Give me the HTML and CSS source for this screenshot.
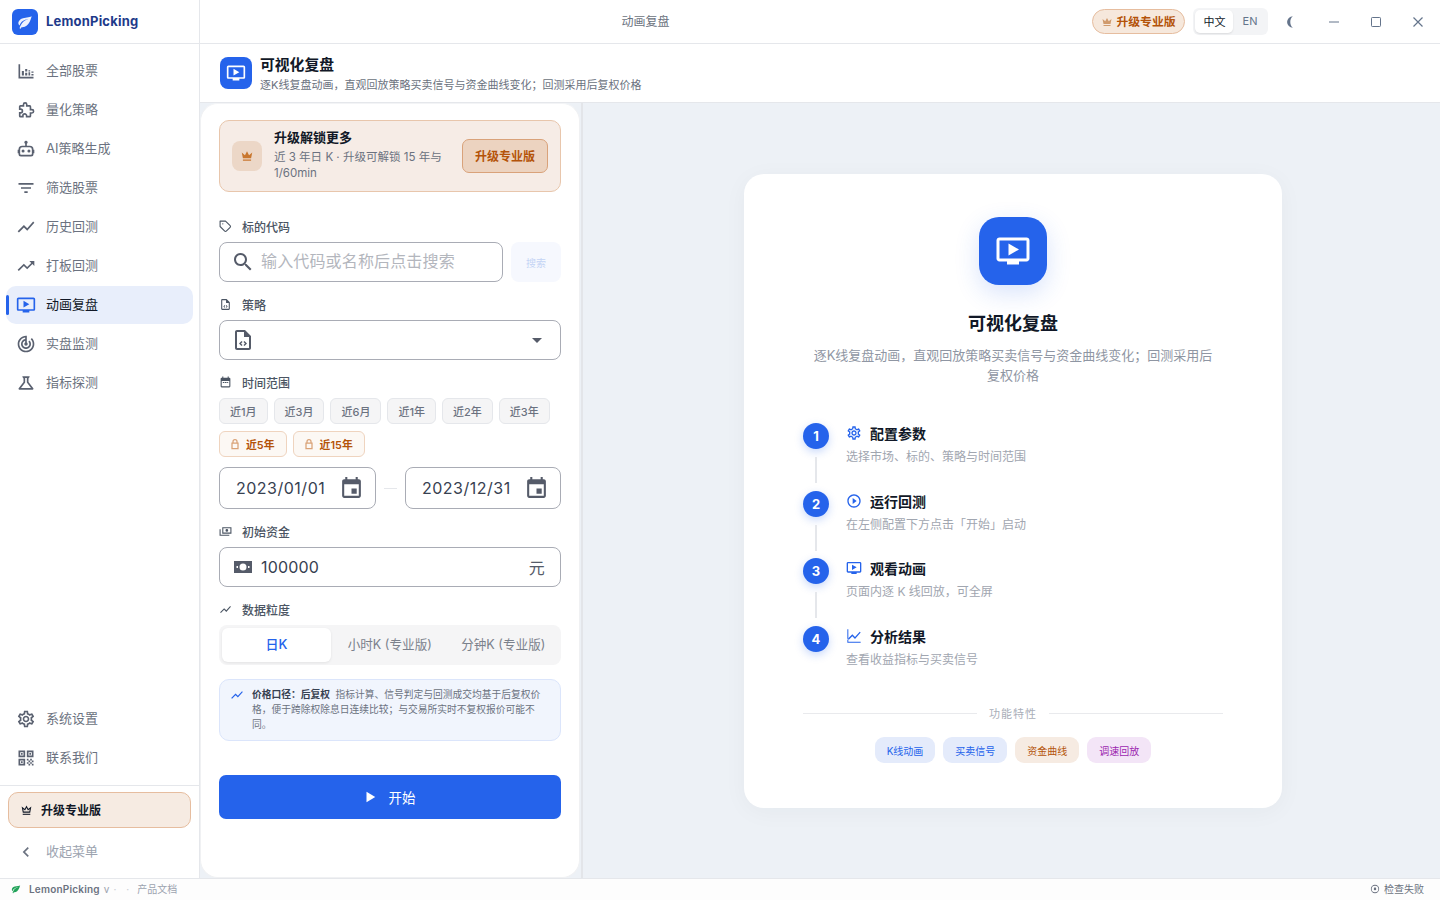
FILE: index.html
```html
<!DOCTYPE html>
<html lang="zh-CN">
<head>
<meta charset="utf-8">
<title>LemonPicking</title>
<link rel="stylesheet" href="styles.css">
</head>
<body>
<div class="app">
  <div class="top">
    <aside class="sidebar">
      <div class="brand">
        <span class="brand-logo"><svg viewBox="0 0 24 24" class="i16"><path fill="#fff" fill-opacity=".92" d="M17 8C8 10 5.900 16.170 3.820 21.340l1.890.66.95-2.300c.48.17.98.3 1.340.3C19 20 22 3 22 3c-1 2-8 2.250-13 3.250S2 11.500 2 13.500s1.750 3.750 1.750 3.750C7 8 17 8 17 8z"/></svg></span>
        <span class="brand-name">LemonPicking</span>
      </div>
      <nav class="nav">
        <a class="nav-item"><svg viewBox="0 0 24 24" class="i20"><path fill="currentColor" d="M3 4h2v15h16v2H3zM7 12h2.500v5.500H7zM11 14h2.500v3.500H11zM11 9.500h2.500V12.500H11zM15 13.500h2v4h-2zM15 11h2v1.500h-2zM18.500 15.500H21v2h-2.500zM18.500 12.500H21v1.500h-2.500z"/></svg><span>全部股票</span></a>
        <a class="nav-item"><svg viewBox="-1.500 -1.500 27 27" class="i20"><path fill="none" stroke="currentColor" stroke-width="2.200" d="M20 11.500h-2V7.500c0-.55-.45-1-1-1h-4V4.500a2.200 2.200 0 0 0-4.400 0v2H4.500c-.55 0-1 .45-1 1v3.300h1.200a2.500 2.500 0 0 1 0 5H3.500V20c0 .55.45 1 1 1h3.300v-1.200a2.500 2.500 0 0 1 5 0V21H17c.55 0 1-.45 1-1v-4h2a2.250 2.250 0 0 0 0-4.500z"/></svg><span>量化策略</span></a>
        <a class="nav-item"><svg viewBox="0 0 24 24" class="i20"><path fill="currentColor" fill-rule="evenodd" d="M12 2a2 2 0 0 1 1 3.730V8h3.500A4.500 4.500 0 0 1 21 12.500V13h1v4h-1v1a3 3 0 0 1-3 3H6a3 3 0 0 1-3-3v-1H2v-4h1v-.5A4.500 4.500 0 0 1 7.500 8H11V5.730A2 2 0 0 1 12 2zM7.500 10A2.500 2.500 0 0 0 5 12.500V18a1 1 0 0 0 1 1h12a1 1 0 0 0 1-1v-5.500a2.500 2.500 0 0 0-2.500-2.500z"/><circle fill="currentColor" cx="8.500" cy="14.500" r="1.800"/><circle fill="currentColor" cx="15.500" cy="14.500" r="1.800"/></svg><span>AI策略生成</span></a>
        <a class="nav-item"><svg viewBox="0 0 24 24" class="i20"><path fill="currentColor" d="M10 18h4v-2h-4v2zM3 6v2h18V6H3zm3 7h12v-2H6v2z"/></svg><span>筛选股票</span></a>
        <a class="nav-item"><svg viewBox="0 0 24 24" class="i20"><path fill="currentColor" d="M3.500 18.490l6-6.010 4 4L22 6.920l-1.410-1.410-7.090 7.970-4-4L2 16.990z"/></svg><span>历史回测</span></a>
        <a class="nav-item"><svg viewBox="0 0 24 24" class="i20"><path fill="currentColor" d="M16 6l2.290 2.290-4.880 4.880-4-4L2 16.590 3.410 18l6-6 4 4 6.300-6.290L22 12V6z"/></svg><span>打板回测</span></a>
        <a class="nav-item active"><svg viewBox="0 0 24 24" class="i20"><path fill="currentColor" d="M21 3H3c-1.110 0-2 .89-2 2v12c0 1.100.89 2 2 2h5v2h8v-2h5c1.100 0 1.990-.9 1.990-2L23 5c0-1.110-.9-2-2-2zm0 14H3V5h18v12zm-5-6l-7 4V7z"/></svg><span>动画复盘</span></a>
        <a class="nav-item"><svg viewBox="0 0 24 24" class="i20"><path fill="currentColor" d="M19.070 4.930l-1.410 1.410C19.100 7.790 20 9.790 20 12c0 4.420-3.580 8-8 8s-8-3.580-8-8c0-4.080 3.050-7.440 7-7.930v2.020C8.160 6.570 6 9.030 6 12c0 3.310 2.690 6 6 6s6-2.690 6-6c0-1.660-.67-3.160-1.760-4.240l-1.410 1.410C15.550 9.900 16 10.900 16 12c0 2.210-1.790 4-4 4s-4-1.790-4-4c0-1.860 1.280-3.410 3-3.860v2.140c-.6.35-1 .98-1 1.720 0 1.100.9 2 2 2s2-.9 2-2c0-.74-.4-1.380-1-1.720V2h-1C6.480 2 2 6.480 2 12s4.480 10 10 10 10-4.480 10-10c0-2.760-1.120-5.260-2.930-7.070z"/></svg><span>实盘监测</span></a>
        <a class="nav-item"><svg viewBox="0 0 24 24" class="i20"><path fill="currentColor" fill-rule="evenodd" d="M15.960 4H8.040c-.42 0-.65.48-.39.81L9 6.500v4.170L3.200 18.400c-.49.66-.02 1.600.8 1.600h16c.82 0 1.290-.94.8-1.600L15 10.670V6.500l1.350-1.690c.26-.33.03-.81-.39-.81zM13 11.330L18 18H6l5-6.670V6h2z"/></svg><span>指标探测</span></a>
      </nav>
      <div class="nav-bottom">
        <a class="nav-item"><svg viewBox="0 0 24 24" class="i20"><path fill="currentColor" d="M19.430 12.980c.04-.32.07-.64.07-.98 0-.34-.03-.66-.07-.98l2.110-1.650c.19-.15.24-.42.12-.64l-2-3.460c-.09-.16-.26-.25-.44-.25-.06 0-.12.01-.17.03l-2.490 1c-.52-.4-1.080-.73-1.690-.98l-.38-2.650C14.460 2.180 14.250 2 14 2h-4c-.25 0-.46.18-.49.42l-.38 2.650c-.61.25-1.170.59-1.690.98l-2.490-1c-.06-.02-.12-.03-.18-.03-.17 0-.34.09-.43.25l-2 3.460c-.13.22-.07.49.12.64l2.110 1.650c-.04.32-.07.65-.07.98 0 .33.03.66.07.98l-2.110 1.650c-.19.15-.24.42-.12.64l2 3.460c.09.16.26.25.44.25.06 0 .12-.01.17-.03l2.490-1c.52.4 1.080.73 1.690.98l.38 2.650c.03.24.24.42.49.42h4c.25 0 .46-.18.49-.42l.38-2.650c.61-.25 1.170-.59 1.690-.98l2.490 1c.06.02.12.03.18.03.17 0 .34-.09.43-.25l2-3.460c.12-.22.07-.49-.12-.64l-2.110-1.650zm-1.980-1.710c.04.31.05.52.05.73 0 .21-.02.43-.05.73l-.14 1.130.89.7 1.080.84-.7 1.210-1.270-.51-1.040-.42-.9.68c-.43.32-.84.56-1.250.73l-1.060.43-.16 1.130-.2 1.350h-1.400l-.19-1.350-.16-1.130-1.060-.43c-.43-.18-.83-.41-1.230-.71l-.91-.7-1.060.43-1.270.51-.7-1.210 1.080-.84.89-.7-.14-1.130c-.03-.31-.05-.54-.05-.74s.02-.43.05-.73l.14-1.130-.89-.7-1.080-.84.7-1.210 1.270.51 1.040.42.9-.68c.43-.32.84-.56 1.250-.73l1.060-.43.16-1.130.2-1.350h1.390l.19 1.350.16 1.130 1.060.43c.43.18.83.41 1.230.71l.91.7 1.060-.43 1.270-.51.7 1.210-1.070.85-.89.7.14 1.130zM12 8c-2.210 0-4 1.790-4 4s1.790 4 4 4 4-1.790 4-4-1.790-4-4-4zm0 6c-1.100 0-2-.9-2-2s.9-2 2-2 2 .9 2 2-.9 2-2 2z"/></svg><span>系统设置</span></a>
        <a class="nav-item"><svg viewBox="0 0 24 24" class="i20"><path fill="currentColor" d="M3 11h8V3H3v8zm2-6h4v4H5V5zM3 21h8v-8H3v8zm2-6h4v4H5v-4zM13 3v8h8V3h-8zm6 6h-4V5h4v4zM19 19h2v2h-2zM13 13h2v2h-2zM15 15h2v2h-2zM13 17h2v2h-2zM15 19h2v2h-2zM17 17h2v2h-2zM17 13h2v2h-2zM19 15h2v2h-2zM6 6h2v2H6zM6 16h2v2H6zM16 6h2v2h-2z"/></svg><span>联系我们</span></a>
      </div>
      <div class="side-foot">
        <button class="side-pro"><svg viewBox="0 0 24 24" class="i14"><path fill="none" stroke="currentColor" stroke-width="2" d="M6 15L4.500 7l4.500 3.500L12 5l3 5.500L19.500 7 18 15z"/><path fill="currentColor" d="M5 18h14v2H5z"/></svg><span>升级专业版</span></button>
        <a class="nav-item collapse"><svg viewBox="0 0 24 24" class="i20"><path fill="currentColor" d="M15.410 7.410L14 6l-6 6 6 6 1.410-1.410L10.830 12z"/></svg><span>收起菜单</span></a>
      </div>
    </aside>

    <div class="main">
      <header class="titlebar">
        <div class="tb-title">动画复盘</div>
        <div class="tb-tools">
          <span class="tb-pro"><svg viewBox="0 0 24 24" class="i12"><path fill="#d09a6c" d="M5 16L3 6l5.500 4.500L12 4l3.500 6.500L21 6l-2 10H5zm0 2h14v2H5z"/></svg>升级专业版</span>
          <span class="lang"><span class="lang-on">中文</span><span class="lang-off">EN</span></span>
          <svg viewBox="0 0 24 24" class="moon"><path fill="currentColor" d="M17 2a10 10 0 1 0 0 20c-3-2-4.500-6-4.500-10S14 4 17 2z"/></svg>
          <svg viewBox="0 0 14 14" class="win win-min"><path d="M2 7h10" stroke="currentColor" fill="none"/></svg>
          <svg viewBox="0 0 14 14" class="win win-max"><rect x="2.500" y="2.500" width="9" height="9" rx=".8" stroke="currentColor" fill="none"/></svg>
          <svg viewBox="0 0 14 14" class="win win-close"><path d="M2.500 2.500l9 9M11.500 2.500l-9 9" stroke="currentColor" stroke-width="1.200" fill="none"/></svg>
        </div>
      </header>
      <section class="pagehead">
        <span class="ph-icon"><svg viewBox="0 0 24 24" class="i20"><path fill="#fff" d="M21 3H3c-1.110 0-2 .89-2 2v12c0 1.100.89 2 2 2h5v2h8v-2h5c1.100 0 1.990-.9 1.990-2L23 5c0-1.110-.9-2-2-2zm0 14H3V5h18v12zm-5-6l-7 4V7z"/></svg></span>
        <div>
          <h1 class="ph-title">可视化复盘</h1>
          <p class="ph-sub">逐K线复盘动画，直观回放策略买卖信号与资金曲线变化；回测采用后复权价格</p>
        </div>
      </section>
      <div class="content">
        <section class="panel">
          <div class="upsell">
            <span class="up-icon"><svg viewBox="0 0 24 24" class="i14"><path fill="#c9772f" d="M5 16L3 6l5.500 4.500L12 4l3.500 6.500L21 6l-2 10H5zm0 2h14v2H5z"/></svg></span>
            <div class="up-text">
              <div class="up-title">升级解锁更多</div>
              <div class="up-sub">近 3 年日 K · 升级可解锁 15 年与 1/60min</div>
            </div>
            <button class="up-btn">升级专业版</button>
          </div>

          <div class="label lb-code"><svg viewBox="0 0 24 24" class="i13"><path fill="none" stroke="currentColor" stroke-width="2" stroke-linejoin="round" d="M20.590 13.410l-7.170 7.170a2 2 0 0 1-2.830 0L2 12V2h10l8.590 8.590a2 2 0 0 1 0 2.820z"/><circle cx="7" cy="7" r="1.200" fill="currentColor"/></svg>标的代码</div>
          <div class="row-search">
            <div class="field field-grow"><svg viewBox="0 0 24 24" class="i24 f-ic"><path fill="currentColor" d="M15.500 14h-.79l-.28-.27C15.410 12.590 16 11.110 16 9.500 16 5.910 13.090 3 9.500 3S3 5.910 3 9.500 5.910 16 9.500 16c1.610 0 3.090-.59 4.230-1.570l.27.28v.79l5 4.990L20.490 19l-4.990-5zm-6 0C7.010 14 5 11.990 5 9.500S7.010 5 9.500 5 14 7.010 14 9.500 11.990 14 9.500 14z"/></svg><span class="ph">输入代码或名称后点击搜索</span></div>
            <button class="search-btn">搜索</button>
          </div>

          <div class="label"><svg viewBox="0 0 24 24" class="i13"><path fill="currentColor" d="M14 2H6c-1.100 0-2 .9-2 2v16c0 1.100.9 2 2 2h12c1.100 0 2-.9 2-2V8l-6-6zm4 18H6V4h7v5h5v11z"/><path fill="currentColor" d="M10.500 13l-2.500 2.500 2.500 2.500 1-1-1.500-1.500 1.500-1.500zM13.500 13l-1 1 1.500 1.500-1.500 1.500 1 1 2.500-2.500z"/></svg>策略</div>
          <div class="field">
            <svg viewBox="0 0 24 24" class="i24 f-ic"><path fill="currentColor" d="M14 2H6c-1.100 0-2 .9-2 2v16c0 1.100.9 2 2 2h12c1.100 0 2-.9 2-2V8l-6-6zm4 18H6V4h7v5h5v11z"/><path fill="currentColor" d="M10.500 13l-2.500 2.500 2.500 2.500 1-1-1.500-1.500 1.500-1.500zM13.500 13l-1 1 1.500 1.500-1.500 1.500 1 1 2.500-2.500z"/></svg>
            <svg viewBox="0 0 24 24" class="i24 caret"><path fill="currentColor" d="M7 10l5 5 5-5z"/></svg>
          </div>

          <div class="label"><svg viewBox="0 0 24 24" class="i13"><path fill="currentColor" d="M19 3h-1V1h-2v2H8V1H6v2H5a2 2 0 0 0-2 2v14a2 2 0 0 0 2 2h14a2 2 0 0 0 2-2V5a2 2 0 0 0-2-2zm0 16H5V9h14v10zM7 11h3v2H7zm4 0h3v2h-3zm4 0h2v2h-2z"/></svg>时间范围</div>
          <div class="chips">
            <span class="chip">近1月</span><span class="chip">近3月</span><span class="chip">近6月</span><span class="chip">近1年</span><span class="chip">近2年</span><span class="chip">近3年</span>
            <span class="chip chip-lock"><svg viewBox="0 0 24 24" class="i12"><path fill="none" stroke="#d9a277" stroke-width="2.500" d="M8 10V7a4 4 0 0 1 8 0v3M6 10h12v11H6z"/></svg>近5年</span>
            <span class="chip chip-lock"><svg viewBox="0 0 24 24" class="i12"><path fill="none" stroke="#d9a277" stroke-width="2.500" d="M8 10V7a4 4 0 0 1 8 0v3M6 10h12v11H6z"/></svg>近15年</span>
          </div>
          <div class="dates">
            <div class="date"><span>2023/01/01</span><svg viewBox="0 0 24 24" class="i25"><path fill="currentColor" d="M17 12h-5v5h5v-5zM16 1v2H8V1H6v2H5c-1.110 0-1.990.9-1.990 2L3 19c0 1.100.89 2 2 2h14c1.100 0 2-.9 2-2V5c0-1.100-.9-2-2-2h-1V1h-2zm3 18H5V8h14v11z"/></svg></div>
            <span class="date-sep"></span>
            <div class="date"><span>2023/12/31</span><svg viewBox="0 0 24 24" class="i25"><path fill="currentColor" d="M17 12h-5v5h5v-5zM16 1v2H8V1H6v2H5c-1.110 0-1.990.9-1.990 2L3 19c0 1.100.89 2 2 2h14c1.100 0 2-.9 2-2V5c0-1.100-.9-2-2-2h-1V1h-2zm3 18H5V8h14v11z"/></svg></div>
          </div>

          <div class="label"><svg viewBox="0 0 24 24" class="i13"><path fill="currentColor" fill-rule="evenodd" d="M6 4h17v12H6zM8 6v8h13V6zM14.500 7.500a2.500 2.500 0 1 1 0 5 2.500 2.500 0 0 1 0-5zM1 8h2v10h16v2H1z"/></svg>初始资金</div>
          <div class="field">
            <svg viewBox="0 0 24 24" class="i24 f-ic"><path fill="currentColor" fill-rule="evenodd" d="M3 6h18v12H3zM12 8.500a3.500 3.500 0 1 0 0 7 3.500 3.500 0 0 0 0-7zM5.500 11H7v2H5.500zM17 11h1.500v2H17z"/></svg>
            <span class="val">100000</span>
            <span class="unit">元</span>
          </div>

          <div class="label"><svg viewBox="0 0 24 24" class="i13"><path fill="currentColor" d="M3.500 18.490l6-6.010 4 4L22 6.920l-1.410-1.410-7.090 7.970-4-4L2 16.990z"/></svg>数据粒度</div>
          <div class="seg">
            <span class="seg-on">日K</span>
            <span class="seg-off">小时K (专业版)</span>
            <span class="seg-off">分钟K (专业版)</span>
          </div>

          <div class="note">
            <svg viewBox="0 0 24 24" class="i14 note-ic"><path fill="#2563eb" d="M3.500 18.490l6-6.010 4 4L22 6.920l-1.410-1.410-7.090 7.970-4-4L2 16.990z"/></svg>
            <p><b>价格口径：后复权</b>&nbsp; 指标计算、信号判定与回测成交均基于后复权价格，便于跨除权除息日连续比较；与交易所实时不复权报价可能不同。</p>
          </div>

          <button class="start"><svg viewBox="0 0 24 24" class="i14"><path fill="#fff" d="M6 3v18l15-9z"/></svg><span>开始</span></button>
        </section>

        <section class="stage">
          <div class="card">
            <span class="card-icon"><svg viewBox="0 0 24 24" class="i36"><path fill="#fff" d="M21 3H3c-1.110 0-2 .89-2 2v12c0 1.100.89 2 2 2h5v2h8v-2h5c1.100 0 1.990-.9 1.990-2L23 5c0-1.110-.9-2-2-2zm0 14H3V5h18v12zm-5-6l-7 4V7z"/></svg></span>
            <h2 class="card-title">可视化复盘</h2>
            <p class="card-desc">逐K线复盘动画，直观回放策略买卖信号与资金曲线变化；回测采用后复权价格</p>
            <ol class="steps">
              <li class="step">
                <div class="step-rail"><span class="step-no">1</span><span class="step-line"></span></div>
                <div class="step-body">
                  <div class="step-title"><svg viewBox="0 0 24 24" class="i16"><path fill="#2563eb" d="M19.430 12.980c.04-.32.07-.64.07-.98 0-.34-.03-.66-.07-.98l2.110-1.650c.19-.15.24-.42.12-.64l-2-3.460c-.09-.16-.26-.25-.44-.25-.06 0-.12.01-.17.03l-2.490 1c-.52-.4-1.080-.73-1.690-.98l-.38-2.650C14.460 2.180 14.250 2 14 2h-4c-.25 0-.46.18-.49.42l-.38 2.650c-.61.25-1.170.59-1.690.98l-2.490-1c-.06-.02-.12-.03-.18-.03-.17 0-.34.09-.43.25l-2 3.460c-.13.22-.07.49.12.64l2.110 1.650c-.04.32-.07.65-.07.98 0 .33.03.66.07.98l-2.110 1.650c-.19.15-.24.42-.12.64l2 3.460c.09.16.26.25.44.25.06 0 .12-.01.17-.03l2.490-1c.52.4 1.080.73 1.690.98l.38 2.650c.03.24.24.42.49.42h4c.25 0 .46-.18.49-.42l.38-2.650c.61-.25 1.170-.59 1.690-.98l2.490 1c.06.02.12.03.18.03.17 0 .34-.09.43-.25l2-3.460c.12-.22.07-.49-.12-.64l-2.110-1.650zm-1.980-1.710c.04.31.05.52.05.73 0 .21-.02.43-.05.73l-.14 1.130.89.7 1.080.84-.7 1.210-1.270-.51-1.040-.42-.9.68c-.43.32-.84.56-1.250.73l-1.060.43-.16 1.130-.2 1.350h-1.400l-.19-1.350-.16-1.130-1.060-.43c-.43-.18-.83-.41-1.230-.71l-.91-.7-1.060.43-1.270.51-.7-1.210 1.080-.84.89-.7-.14-1.130c-.03-.31-.05-.54-.05-.74s.02-.43.05-.73l.14-1.130-.89-.7-1.080-.84.7-1.210 1.270.51 1.040.42.9-.68c.43-.32.84-.56 1.250-.73l1.060-.43.16-1.130.2-1.350h1.390l.19 1.350.16 1.130 1.060.43c.43.18.83.41 1.230.71l.91.7 1.060-.43 1.270-.51.7 1.210-1.070.85-.89.7.14 1.130zM12 8c-2.210 0-4 1.790-4 4s1.790 4 4 4 4-1.790 4-4-1.790-4-4-4zm0 6c-1.100 0-2-.9-2-2s.9-2 2-2 2 .9 2 2-.9 2-2 2z"/></svg><span>配置参数</span></div>
                  <div class="step-desc">选择市场、标的、策略与时间范围</div>
                </div>
              </li>
              <li class="step">
                <div class="step-rail"><span class="step-no">2</span><span class="step-line"></span></div>
                <div class="step-body">
                  <div class="step-title"><svg viewBox="0 0 24 24" class="i16"><path fill="#2563eb" d="M10 16.500l6-4.500-6-4.500v9zM12 2C6.480 2 2 6.480 2 12s4.480 10 10 10 10-4.480 10-10S17.520 2 12 2zm0 18c-4.410 0-8-3.590-8-8s3.590-8 8-8 8 3.590 8 8-3.590 8-8 8z"/></svg><span>运行回测</span></div>
                  <div class="step-desc">在左侧配置下方点击「开始」启动</div>
                </div>
              </li>
              <li class="step">
                <div class="step-rail"><span class="step-no">3</span><span class="step-line"></span></div>
                <div class="step-body">
                  <div class="step-title"><svg viewBox="0 0 24 24" class="i16"><path fill="#2563eb" d="M21 3H3c-1.110 0-2 .89-2 2v12c0 1.100.89 2 2 2h5v2h8v-2h5c1.100 0 1.990-.9 1.990-2L23 5c0-1.110-.9-2-2-2zm0 14H3V5h18v12zm-5-6l-7 4V7z"/></svg><span>观看动画</span></div>
                  <div class="step-desc">页面内逐 K 线回放，可全屏</div>
                </div>
              </li>
              <li class="step">
                <div class="step-rail"><span class="step-no">4</span></div>
                <div class="step-body">
                  <div class="step-title"><svg viewBox="0 0 24 24" class="i16"><path fill="#2563eb" d="M3.500 18.490l6-6.010 4 4L22 6.920l-1.410-1.410-7.090 7.970-4-4L2 16.990z M2 2h1.500v18.500H22V22H2z"/></svg><span>分析结果</span></div>
                  <div class="step-desc">查看收益指标与买卖信号</div>
                </div>
              </li>
            </ol>
            <div class="divider"><span>功能特性</span></div>
            <div class="tags">
              <span class="tag tag-blue tag-k">K线动画</span>
              <span class="tag tag-blue">买卖信号</span>
              <span class="tag tag-orange">资金曲线</span>
              <span class="tag tag-purple">调速回放</span>
            </div>
          </div>
        </section>
      </div>
    </div>
  </div>
  <footer class="status">
    <svg viewBox="0 0 24 24" class="i10"><path fill="#22a35a" d="M17 8C8 10 5.900 16.170 3.820 21.340l1.890.66.95-2.300c.48.17.98.3 1.340.3C19 20 22 3 22 3c-1 2-8 2.250-13 3.250S2 11.500 2 13.500s1.750 3.750 1.750 3.750C7 8 17 8 17 8z"/></svg>
    <b class="st-name">LemonPicking</b><span class="st-ver">v</span><span class="st-dot">·</span><span class="st-dot st-dot2">·</span><span class="st-doc">产品文档</span>
    <span class="st-right"><svg viewBox="0 0 24 24" class="i10"><path fill="currentColor" d="M11 7h2v2h-2zM12 2a10 10 0 1 0 0 20 10 10 0 0 0 0-20zm0 18a8 8 0 1 1 0-16 8 8 0 0 1 0 16zm-3-8a3 3 0 1 0 6 0 3 3 0 0 0-6 0z"/></svg>检查失败</span>
  </footer>
</div>
</body>
</html>
```

FILE: styles.css
```css
* { box-sizing: border-box; }
html, body { margin: 0; height: 100%; }
body { font-family: "Inter", "Noto Sans CJK SC", sans-serif; color: #111827; background: #fff; overflow: hidden; }
h1, h2, p, ol { margin: 0; padding: 0; }
svg { flex: none; display: block; }
button { font-family: inherit; cursor: pointer; }
.i10 { width: 10px; height: 10px; }
.i12 { width: 12px; height: 12px; }
.i13 { width: 13px; height: 13px; }
.i14 { width: 14px; height: 14px; }
.i16 { width: 16px; height: 16px; }
.i18 { width: 18px; height: 18px; }
.i20 { width: 20px; height: 20px; }
.i24 { width: 24px; height: 24px; }
.i25 { width: 25px; height: 25px; }
.i36 { width: 36px; height: 36px; }

.app { display: flex; flex-direction: column; height: 900px; }
.top { flex: 1; display: flex; min-height: 0; }

/* sidebar */
.sidebar { width: 200px; flex: none; display: flex; flex-direction: column; border-right: 1px solid #e5e7eb; background: #fff; }
.brand { height: 44px; flex: none; display: flex; align-items: center; gap: 8px; padding: 0 12px; border-bottom: 1px solid #e5e7eb; }
.brand-logo { width: 26px; height: 26px; border-radius: 6px; background: #2563eb; display: flex; align-items: center; justify-content: center; }
.brand-name { font-size: 13px; font-weight: 700; color: #1e3a8a; letter-spacing: .2px; margin-top: -2px; }
.nav { flex: 1; padding: 8px 6px 0; display: flex; flex-direction: column; gap: 1px; }
.nav-item { position: relative; height: 38px; display: flex; align-items: center; gap: 10px; padding: 0 12px 0 10px; border-radius: 10px; font-size: 13px; color: #6b7280; }
.nav-item span { margin-top: -4px; }
.nav-item svg { color: #5a6170; }
.nav-item.active { background: #e8eefb; color: #111827; }
.nav-item.active svg { color: #2563eb; }
.nav-item.active::before { content: ""; position: absolute; left: 0; top: 9px; width: 3px; height: 20px; background: #2563eb; border-radius: 2px; }
.nav-bottom { flex: none; padding: 0 6px 8px; display: flex; flex-direction: column; gap: 1px; }
.side-foot { flex: none; padding: 6px 8px 7px; border-top: 1px solid #e5e7eb; }
.side-pro { width: 100%; height: 36px; display: flex; align-items: center; gap: 8px; padding: 0 11px; border: 1px solid #e6bd9f; border-radius: 10px; background: #f6ebe2; font-size: 12px; font-weight: 700; color: #111827; }
.side-pro svg { width: 13px; height: 13px; }
.side-pro span { margin-top: -2px; }
.nav-item.collapse { margin: 5px -2px 0; color: #9ca3af; }
.nav-item.collapse svg { color: #6b7280; }

/* main */
.main { flex: 1; min-width: 0; display: flex; flex-direction: column; }
.titlebar { height: 44px; flex: none; position: relative; display: flex; align-items: center; border-bottom: 1px solid #e5e7eb; background: #fff; }
.tb-title { width: 891px; text-align: center; font-size: 12px; color: #6b7280; margin-top: -2px; }
.tb-tools { flex: 1; display: flex; align-items: center; }
.tb-pro { height: 25px; width: 93px; display: flex; align-items: center; justify-content: center; gap: 3px; padding-bottom: 2px; border: 1px solid #e6bd9f; border-radius: 13px; background: #f6e8dc; font-size: 11.840px; font-weight: 700; color: #b45309; margin-left: 1px; }
.tb-pro svg { margin-top: 2px; }
.lang { margin-left: 8px; width: 75px; height: 27px; display: flex; align-items: center; padding: 2px; background: #f3f4f6; border-radius: 6px; font-size: 11px; }
.lang-on { width: 38px; height: 23px; display: flex; align-items: center; justify-content: center; padding: 0 0 2px 1px; background: #fff; border-radius: 5px; color: #111827; box-shadow: 0 1px 2px rgba(0,0,0,.1); }
.lang-off { flex: 1; text-align: center; color: #64748b; padding: 0 0 2px 1px; }
.moon { width: 14px; height: 14px; margin-left: 15px; color: #64748b; }
.win { width: 14px; height: 14px; color: #64748b; }
.win-min { margin-left: 30px; }
.win-max { margin-left: 28px; }
.win-close { margin-left: 28px; }

.pagehead { height: 59px; flex: none; display: flex; align-items: center; gap: 8px; padding: 0 20px; border-bottom: 1px solid #e5e7eb; background: #fff; }
.ph-icon { width: 32px; height: 32px; border-radius: 8px; background: #2563eb; display: flex; align-items: center; justify-content: center; }
.ph-title { font-size: 14.800px; line-height: 20px; font-weight: 700; color: #111827; margin-top: 1px; }
.ph-sub { font-size: 11px; line-height: 16px; color: #6b7280; margin-top: 2px; }

.content { flex: 1; display: flex; min-height: 0; background: #edf1f6; }

/* left panel */
.panel { width: 380px; flex: none; background: #fff; border: 1px solid #f0f1f3; border-top-color: #f3f4f6; border-radius: 18px; padding: 16px 18px 0; }
.upsell { height: 72px; display: flex; align-items: center; padding: 0 12px; border: 1px solid #e8c6ac; border-radius: 10px; background: #f6ece6; }
.up-icon { width: 30px; height: 30px; border-radius: 8px; background: #ecd7c7; display: flex; align-items: center; justify-content: center; flex: none; }
.up-text { width: 180px; margin: -4px 0 0 12px; }
.up-title { font-size: 13px; line-height: 18px; font-weight: 700; color: #111827; }
.up-sub { font-size: 11.520px; line-height: 16px; color: #6b7280; margin-top: 3px; }
.up-btn { margin-left: auto; width: 86px; height: 34px; padding: 0 0 2px; border: 1px solid #d9a27a; border-radius: 7px; background: #ecd3c0; color: #b45309; font-size: 12px; font-weight: 700; }

.label { display: flex; align-items: center; gap: 10px; height: 18px; margin: 13px 0 7px; font-size: 12px; font-weight: 500; color: #4b5563; }
.label svg { color: #4b5563; }
.lb-code { margin-top: 25px; }
.row-search { display: flex; gap: 8px; }
.field { height: 40px; display: flex; align-items: center; padding: 0 14px 0 11px; border: 1px solid #a9acb5; border-radius: 8px; background: #fff; font-size: 16px; letter-spacing: .15px; color: #374151; }
.field-grow { flex: 1; }
.f-ic { color: #555b69; margin-right: 6px; }
.ph { color: #b3b6bd; font-size: 16px; margin-top: -4px; }
.search-btn { width: 50px; height: 40px; border: 0; border-radius: 8px; background: #f6f8fe; color: #c4d4f5; font-size: 10px; padding: 0; }
.caret { margin-left: auto; margin-right: -3px; color: #555b69; }
.unit { margin-left: auto; margin-right: 1px; color: #555b69; }

.chips { display: flex; flex-wrap: wrap; gap: 7px 6px; }
.chip { height: 26px; display: flex; align-items: center; padding: 0 10px 1px; border: 1px solid #e5e7eb; border-radius: 6px; background: #f5f5f6; font-size: 11px; color: #6b7280; font-weight: 500; }
.chip-lock { gap: 5px; padding: 0 11px 1px 9px; font-size: 10.880px; background: #fcf8f4; border-color: #efd4bf; color: #b45309; font-weight: 600; }
.dates { display: flex; align-items: center; margin-top: 10px; }
.date { width: 157px; height: 42px; display: flex; align-items: center; justify-content: space-between; padding: 0 11px 0 16px; border: 1px solid #a9acb5; border-radius: 8px; font-size: 16px; letter-spacing: .5px; color: #374151; }
.date svg { color: #555b69; }
.date:last-child { width: 156px; }
.date-sep { width: 13px; height: 1px; background: #e5e7eb; margin: 0 8px; }
.seg { height: 40px; display: flex; align-items: center; gap: 4px; padding: 3px; background: #f5f5f6; border-radius: 8px; font-size: 12.600px; }
.seg-on { width: 109px; height: 34px; display: flex; align-items: center; justify-content: center; padding-bottom: 4px; background: #fff; border-radius: 6px; box-shadow: 0 1px 3px rgba(0,0,0,.08); color: #2563eb; font-weight: 500; font-size: 13px; }
.seg-off { flex: 1; text-align: center; color: #7b818c; padding-bottom: 3px; }
.note { display: flex; gap: 8px; height: 62px; margin-top: 14px; padding: 7px 17px 7px 10px; border: 1px solid #dbe5fb; border-radius: 10px; background: #f1f5fd; font-size: 9.760px; line-height: 15px; color: #6b7280; }
.note-ic { margin-top: 1px; }
.note b { color: #374151; font-weight: 700; }
.start { width: 100%; height: 44px; margin-top: 34px; display: flex; align-items: center; justify-content: center; gap: 12px; padding: 0 2px 0 0; border: 0; border-radius: 7px; background: #2563eb; color: #fff; font-size: 13.440px; }

/* stage */
.stage { flex: 1; min-width: 0; display: flex; align-items: center; justify-content: center; padding-left: 3px; border-left: 2px solid #e3e5e9; margin-left: 1px; }
.card { width: 538px; height: 634px; display: flex; flex-direction: column; align-items: center; padding: 43px 59px 0; background: #fff; border-radius: 20px; box-shadow: 0 4px 24px rgba(30,41,59,.04); }
.card-icon { width: 68px; height: 68px; border-radius: 20px; flex: none; background: #2563eb; display: flex; align-items: center; justify-content: center; box-shadow: 0 8px 24px rgba(37,99,235,.18); }
.card-title { margin-top: 26px; font-size: 18px; line-height: 26px; font-weight: 700; color: #111827; }
.card-desc { margin-top: 8px; width: 402px; text-align: center; font-size: 13px; line-height: 20px; color: #8f96a3; }
.steps { list-style: none; width: 100%; margin-top: 38.500px; }
.step { display: flex; height: 67.600px; gap: 17px; }
.step-rail { width: 26px; display: flex; flex-direction: column; align-items: center; }
.step-no { width: 26px; height: 26px; flex: none; border-radius: 50%; background: #2563eb; color: #fff; display: flex; align-items: center; justify-content: center; font-size: 13px; font-weight: 700; box-shadow: 0 3px 8px rgba(37,99,235,.25); }
.step-line { width: 2px; height: 26px; background: #e5e7eb; margin-top: 8px; }
.step-title { display: flex; align-items: center; gap: 8px; height: 22px; margin-top: -1px; font-size: 14px; font-weight: 700; color: #111827; }
.step-desc { margin-top: 3px; font-size: 12px; line-height: 20px; color: #a1a6b0; }
.divider { width: 100%; display: flex; align-items: center; gap: 12px; margin-top: 12px; font-size: 11px; letter-spacing: 1px; color: #a9aeb8; }
.divider::before, .divider::after { content: ""; flex: 1; height: 1px; background: #e9eaed; }
.tags { display: flex; gap: 8px; margin-top: 16px; }
.tag { height: 26px; display: flex; align-items: center; padding: 0 12px; border-radius: 9px; font-size: 10px; }
.tag-blue { background: #e4ebfb; color: #2563eb; }
.tag-orange { background: #f6ebe2; color: #b45309; }
.tag-purple { background: #f3e5f7; color: #9c27b0; }

/* status */
.status { height: 22px; flex: none; display: flex; align-items: center; padding: 0 16px 2px 11px; border-top: 1px solid #e5e7eb; background: #fdfdfd; font-size: 10px; color: #9ca3af; }
.st-name { margin-left: 8px; color: #6b7280; font-weight: 600; letter-spacing: .2px; }
.st-ver { margin-left: 4px; }
.st-dot { margin-left: 4px; color: #c9ccd3; }
.st-dot2 { margin-left: 10px; }
.st-doc { margin-left: 8px; }
.st-right { margin-left: auto; display: flex; align-items: center; gap: 4px; color: #6b7280; }
```
